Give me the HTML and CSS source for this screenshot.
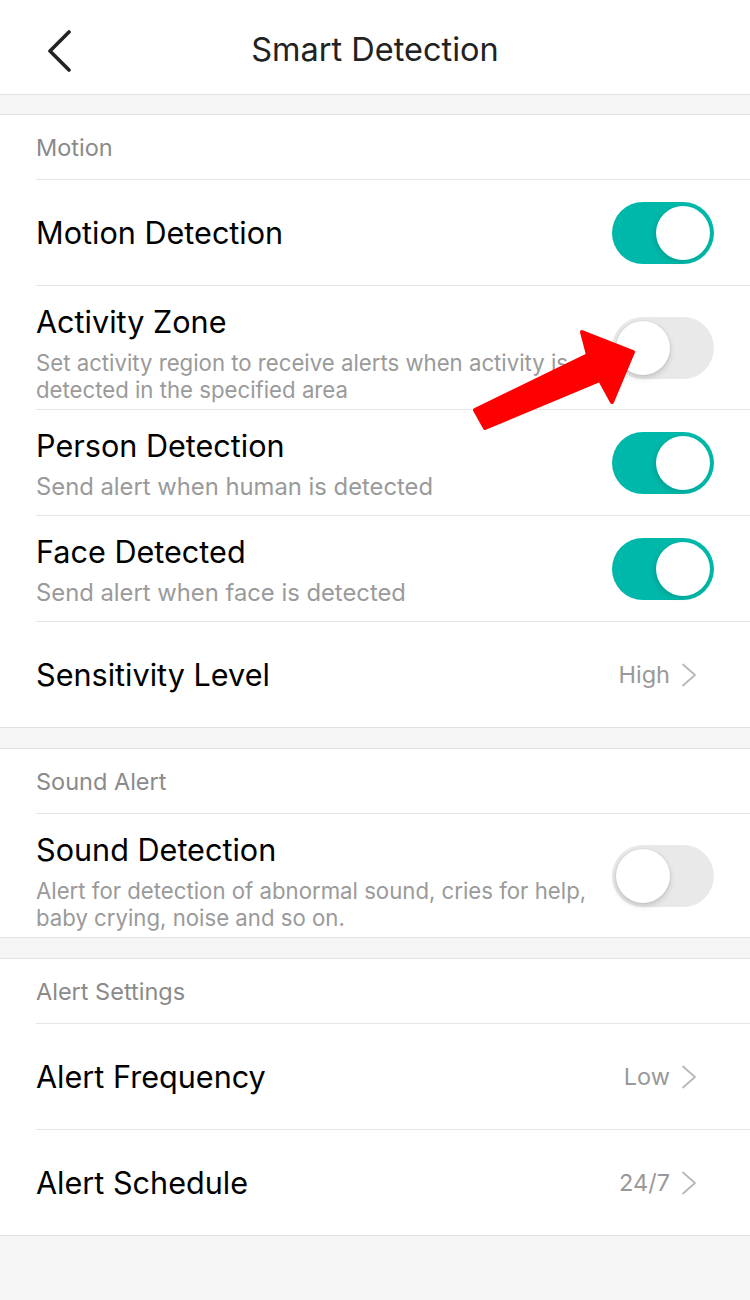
FILE: index.html
```html
<!DOCTYPE html>
<html lang="en">
<head>
  <meta charset="UTF-8">
  <title>Smart Detection</title>
  <link rel="stylesheet" href="styles.css">
</head>
<body>
  <div class="topbar">
    <button class="back" aria-label="Back">
      <svg width="26" height="42" viewBox="0 0 26 42"><path d="M23 2 L4 21 L23 40" fill="none" stroke="#222" stroke-width="3.6" stroke-linecap="round" stroke-linejoin="round"/></svg>
    </button>
    <h1>Smart Detection</h1>
  </div>

  <div class="group">
    <div class="group-title">Motion</div>
    <div class="row">
      <div class="row-text"><div class="label">Motion Detection</div></div>
      <span class="switch on"></span>
    </div>
    <div class="row">
      <div class="row-text sub">
        <div class="label">Activity Zone</div>
        <div class="desc">Set activity region to receive alerts when activity is detected in the specified area</div>
      </div>
      <span class="switch"></span>
    </div>
    <div class="row">
      <div class="row-text sub">
        <div class="label">Person Detection</div>
        <div class="desc big">Send alert when human is detected</div>
      </div>
      <span class="switch on"></span>
    </div>
    <div class="row">
      <div class="row-text sub">
        <div class="label">Face Detected</div>
        <div class="desc big">Send alert when face is detected</div>
      </div>
      <span class="switch on"></span>
    </div>
    <div class="row">
      <div class="row-text"><div class="label">Sensitivity Level</div></div>
      <span class="value">High</span>
      <svg class="chev" width="16" height="24" viewBox="0 0 16 24"><path d="M2 1.5 L14 12 L2 22.5" fill="none" stroke="#b8b8b8" stroke-width="1.8" stroke-linecap="round" stroke-linejoin="round"/></svg>
    </div>
  </div>

  <div class="group">
    <div class="group-title">Sound Alert</div>
    <div class="row">
      <div class="row-text sub">
        <div class="label">Sound Detection</div>
        <div class="desc">Alert for detection of abnormal sound, cries for help, baby crying, noise and so on.</div>
      </div>
      <span class="switch"></span>
    </div>
  </div>

  <div class="group">
    <div class="group-title">Alert Settings</div>
    <div class="row">
      <div class="row-text"><div class="label">Alert Frequency</div></div>
      <span class="value">Low</span>
      <svg class="chev" width="16" height="24" viewBox="0 0 16 24"><path d="M2 1.5 L14 12 L2 22.5" fill="none" stroke="#b8b8b8" stroke-width="1.8" stroke-linecap="round" stroke-linejoin="round"/></svg>
    </div>
    <div class="row">
      <div class="row-text"><div class="label">Alert Schedule</div></div>
      <span class="value">24/7</span>
      <svg class="chev" width="16" height="24" viewBox="0 0 16 24"><path d="M2 1.5 L14 12 L2 22.5" fill="none" stroke="#b8b8b8" stroke-width="1.8" stroke-linecap="round" stroke-linejoin="round"/></svg>
    </div>
  </div>

  <!-- red pointer drawn over the activity zone switch -->
  <svg class="pointer" width="170" height="110" viewBox="0 0 170 110">
    <polygon points="5,85 118,30 112,7 163,27 142,77 130,55 15,103" fill="#ff0000" stroke="#ff0000" stroke-width="4" stroke-linejoin="round"/>
  </svg>
</body>
</html>
```

FILE: styles.css
```css
body {
  font-family: Inter, "Liberation Sans", sans-serif;
  background-color: #f5f5f5;
  margin: 0;
  padding: 0;
  min-height: 1300px;
  position: relative;
}

.topbar {
  height: 95px;
  background-color: #fff;
  border-bottom: 1px solid #e2e2e2;
  display: flex;
  align-items: center;
  justify-content: center;
  position: relative;
  box-sizing: border-box;
  padding-top: 4px;
}

.topbar h1 {
  margin: 0;
  font-size: 32.5px;
  font-weight: 400;
  color: #222;
}

.back {
  position: absolute;
  left: 46px;
  top: 30px;
  padding: 0;
  border: none;
  background: none;
}

.back svg {
  display: block;
}

.group {
  background-color: #fff;
  border-top: 1px solid #e2e2e2;
  border-bottom: 1px solid #e2e2e2;
  margin-top: 19px;
}

.group + .group {
  margin-top: 20px;
}

.group-title {
  height: 64px;
  margin-left: 36px;
  display: flex;
  align-items: center;
  padding-top: 1px;
  box-sizing: border-box;
  font-size: 23.5px;
  color: #8a8a8a;
}

.row {
  margin-left: 36px;
  padding-right: 36px;
  min-height: 105px;
  border-top: 1px solid #e5e5e5;
  display: flex;
  align-items: center;
}

.row-text {
  flex: 1;
}

.row-text.sub {
  align-self: flex-start;
  padding: 18px 0 6px;
}

.label {
  font-size: 30.6px;
  line-height: 36px;
  color: #000;
}

.desc {
  margin-top: 9px;
  max-width: 560px;
  font-size: 22.2px;
  line-height: 27px;
  color: #9a9a9a;
}

.desc.big {
  font-size: 23.8px;
}

.value {
  font-size: 23.5px;
  color: #999;
  margin-right: 11px;
}

.chev {
  margin-right: 17px;
}

.switch {
  width: 102px;
  height: 62px;
  border-radius: 31px;
  background-color: #e9e9ea;
  position: relative;
  flex-shrink: 0;
}

.switch::after {
  content: "";
  position: absolute;
  top: 4px;
  left: 4px;
  width: 54px;
  height: 54px;
  border-radius: 50%;
  background-color: #fff;
  box-shadow: 0 3px 6px rgba(0, 0, 0, 0.16), 0 0 0 1px rgba(0, 0, 0, 0.04);
}

.switch.on {
  background-color: #00b8a9;
}

.switch.on::after {
  left: 44px;
  box-shadow: -2px 2px 5px rgba(0, 0, 0, 0.12);
}

.pointer {
  position: absolute;
  left: 470px;
  top: 325px;
}
```
